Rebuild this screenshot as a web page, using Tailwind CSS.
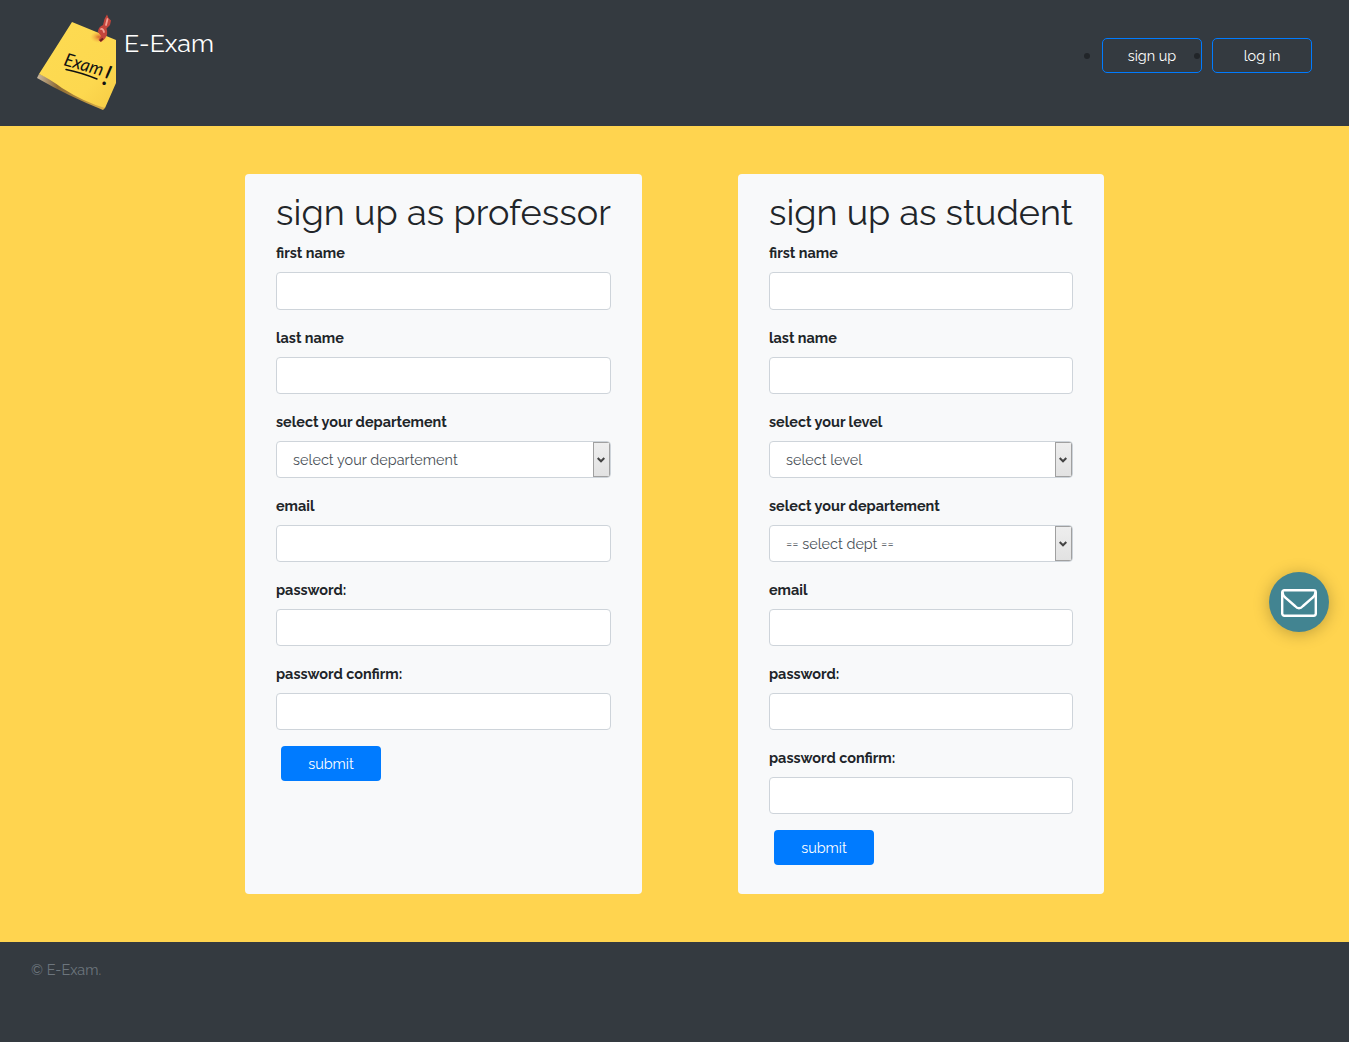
<!DOCTYPE html>
<html lang="en">
<head>
<meta charset="utf-8">
<title>E-Exam</title>
<script src="https://cdn.jsdelivr.net/npm/@tailwindcss/browser@4"></script>
</head>
<body class="min-h-screen flex flex-col bg-[#ffd44f] font-[Raleway,Lato,sans-serif] text-[14.4px] leading-[23px] text-[#212529]">
<header class="h-[126px] flex items-start justify-between bg-[#343a40] pl-[37px] pr-[37px]">
  <a class="flex text-white">
    <svg class="mt-[14px] w-[80px] h-[97px]" viewBox="37 14 80 97">
      <defs>
        <linearGradient id="note" x1="0" y1="0" x2="1" y2="1"><stop offset="0" stop-color="#fddb52"/><stop offset=".7" stop-color="#fdd84f"/><stop offset="1" stop-color="#f6cc45"/></linearGradient>
        <linearGradient id="curl" x1="0" y1="0" x2="1" y2="0"><stop offset="0" stop-color="#c9b8a0"/><stop offset=".3" stop-color="#8d6a35"/><stop offset="1" stop-color="#dcb047"/></linearGradient>
        <radialGradient id="glow"><stop offset="0" stop-color="#d9662a"/><stop offset="1" stop-color="#f3b544" stop-opacity="0"/></radialGradient>
      </defs>
      <path d="M39 74L37 78Q68 96 103 110L105 108L80 90Z" fill="url(#curl)"/>
      <path d="M72 22L116 40V83L105 108Q84 102 62 88Q50 79 39 74Q55 49 72 22Z" fill="url(#note)"/>
      <ellipse cx="99" cy="37" rx="9" ry="6" fill="url(#glow)"/>
      <path d="M107 14.500L108.500 18L111 20.500L110 25L106.500 28.500Q108.500 34 105 38.500L101 42L98.500 40L101 36L98 32Q98 27 103 25L104.500 19Z" fill="#c4453c"/>
      <path d="M107.500 19L106 25M101 29Q103 28.500 104 32" fill="none" stroke="#f3a095" stroke-width="1.800" stroke-linecap="round"/>
      <path d="M100 41L103 38.500" stroke="#6f241b" stroke-width="2"/>
      <text x="63" y="65" transform="rotate(16 63 65)" textLength="40" lengthAdjust="spacingAndGlyphs" font-family="Lato, sans-serif" font-style="italic" font-size="18" fill="#111">Exam</text>
      <text x="101" y="84" transform="rotate(16 101 84)" font-family="Lato, sans-serif" font-style="italic" font-size="28" fill="#111">!</text>
      <path d="M66 69.500Q81 72.500 97 79" fill="none" stroke="#111" stroke-width="1.500" stroke-linecap="round"/>
    </svg>
    <span class="ml-[7px] mt-[27px] text-[25px] leading-8">E-Exam</span>
  </a>
  <ul class="mt-[38px] flex gap-[10px] text-white">
    <li class="relative"><span class="absolute -left-[18px] top-[15px] size-[6px] rounded-full bg-[#212529]"></span><a class="flex h-[35px] w-[100px] items-center justify-center rounded-[5px] border border-[#007bff]">sign up</a></li>
    <li class="relative"><span class="absolute -left-[18px] top-[15px] size-[6px] rounded-full bg-[#212529]"></span><a class="flex h-[35px] w-[100px] items-center justify-center rounded-[5px] border border-[#007bff]">log in</a></li>
  </ul>
</header>
<main class="flex grow items-stretch gap-24 pl-[245px] py-12">
  <form class="w-[397px] h-[720px] rounded bg-[#f8f9fa] px-[31px] pt-[17px]">
    <h1 class="h-[50px] whitespace-nowrap text-[36px] leading-[43px] tracking-[0.08px]">sign up as professor</h1>
    <label class="block mb-2 font-bold">first name</label><input class="block h-[38px] w-full mb-4 rounded border border-[#ced4da] bg-white">
    <label class="block mb-2 font-bold">last name</label><input class="block h-[37px] w-full mb-4 rounded border border-[#ced4da] bg-white">
    <label class="block mb-2 font-bold">select your departement</label>
    <div class="flex h-[37px] mb-4 rounded border border-[#ced4da] bg-white overflow-hidden text-[#495057]"><span class="grow pl-4 leading-[35px] tracking-[0.04px]">select your departement</span><span class="flex w-[17px] items-center border border-[#a0a0a0] bg-gradient-to-b from-[#eee] to-[#e2e2e2] pl-[3px]"><svg class="w-2 h-[6px]" viewBox="0 0 8 6"><path d="M.7 1L4 4.3L7.3 1" fill="none" stroke="#444" stroke-width="2"/></svg></span></div>
    <label class="block mb-2 font-bold">email</label><input class="block h-[37px] w-full mb-4 rounded border border-[#ced4da] bg-white">
    <label class="block mb-2 font-bold">password:</label><input class="block h-[37px] w-full mb-4 rounded border border-[#ced4da] bg-white">
    <label class="block mb-2 font-bold">password confirm:</label><input class="block h-[37px] w-full mb-4 rounded border border-[#ced4da] bg-white">
    <button class="ml-[5px] h-[35px] w-[100px] rounded bg-[#007bff] text-white">submit</button>
  </form>
  <form class="w-[366px] h-[720px] rounded bg-[#f8f9fa] px-[31px] pt-[17px]">
    <h1 class="h-[50px] whitespace-nowrap text-[36px] leading-[43px]">sign up as student</h1>
    <label class="block mb-2 font-bold">first name</label><input class="block h-[38px] w-full mb-4 rounded border border-[#ced4da] bg-white">
    <label class="block mb-2 font-bold">last name</label><input class="block h-[37px] w-full mb-4 rounded border border-[#ced4da] bg-white">
    <label class="block mb-2 font-bold">select your level</label>
    <div class="flex h-[37px] mb-4 rounded border border-[#ced4da] bg-white overflow-hidden text-[#495057]"><span class="grow pl-4 leading-[35px]">select level</span><span class="flex w-[17px] items-center border border-[#a0a0a0] bg-gradient-to-b from-[#eee] to-[#e2e2e2] pl-[3px]"><svg class="w-2 h-[6px]" viewBox="0 0 8 6"><path d="M.7 1L4 4.3L7.3 1" fill="none" stroke="#444" stroke-width="2"/></svg></span></div>
    <label class="block mb-2 font-bold">select your departement</label>
    <div class="flex h-[37px] mb-4 rounded border border-[#ced4da] bg-white overflow-hidden text-[#495057]"><span class="grow pl-4 leading-[35px]">== select dept ==</span><span class="flex w-[17px] items-center border border-[#a0a0a0] bg-gradient-to-b from-[#eee] to-[#e2e2e2] pl-[3px]"><svg class="w-2 h-[6px]" viewBox="0 0 8 6"><path d="M.7 1L4 4.3L7.3 1" fill="none" stroke="#444" stroke-width="2"/></svg></span></div>
    <label class="block mb-2 font-bold">email</label><input class="block h-[37px] w-full mb-4 rounded border border-[#ced4da] bg-white">
    <label class="block mb-2 font-bold">password:</label><input class="block h-[37px] w-full mb-4 rounded border border-[#ced4da] bg-white">
    <label class="block mb-2 font-bold">password confirm:</label><input class="block h-[37px] w-full mb-4 rounded border border-[#ced4da] bg-white">
    <button class="ml-[5px] h-[35px] w-[100px] rounded bg-[#007bff] text-white">submit</button>
  </form>
</main>
<footer class="h-[100px] bg-[#343a40] pl-[31px] pt-4 text-[#6c757d]">© E-Exam.</footer>
<a class="fixed right-5 top-[572px] flex size-[60px] items-center justify-center rounded-full bg-[#428491] shadow-[0_2px_16px_rgba(0,0,0,0.25)]">
  <svg class="mt-[2px] w-9 h-[28px]" viewBox="0 0 36 28" fill="none" stroke="#fff" stroke-width="2.4" stroke-linejoin="round"><rect x="1.2" y="1.2" width="33.6" height="25.6" rx="2.2"/><path d="M1.5 3Q1.5 6.5 5 9.2L14 17Q18 21.5 22 17L31 9.2Q34.5 6.5 34.5 3"/></svg>
</a>
</body>
</html>
